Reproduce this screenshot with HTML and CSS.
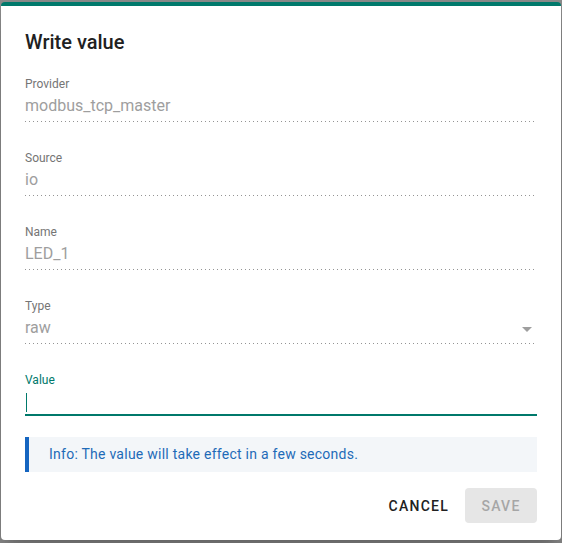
FILE: index.html
```html
<!DOCTYPE html>
<html lang="en">
<head>
  <meta charset="UTF-8">
  <meta name="viewport" content="width=device-width, initial-scale=1.0">
  <title>Write value</title>
  <link rel="stylesheet" href="styles.css">
</head>
<body>
  <div class="dialog">
    <h2 class="dialog-title">Write value</h2>
    <div class="dialog-content">
      <div class="field disabled">
        <label class="field-label">Provider</label>
        <div class="field-input">modbus_tcp_master</div>
      </div>
      <div class="field disabled">
        <label class="field-label">Source</label>
        <div class="field-input">io</div>
      </div>
      <div class="field disabled">
        <label class="field-label">Name</label>
        <div class="field-input">LED_1</div>
      </div>
      <div class="field disabled">
        <label class="field-label">Type</label>
        <div class="field-input select">
          <span class="select-value">raw</span>
          <svg class="select-icon" viewBox="0 0 24 24" width="24" height="24"><path d="M7 10l5 5 5-5z"/></svg>
        </div>
      </div>
      <div class="field focused">
        <label class="field-label">Value</label>
        <div class="field-input"><span class="caret"></span></div>
      </div>
      <div class="info">Info: The value will take effect in a few seconds.</div>
    </div>
    <div class="dialog-actions">
      <button class="btn btn-text">Cancel</button>
      <button class="btn btn-disabled" disabled>Save</button>
    </div>
  </div>
</body>
</html>
```

FILE: styles.css
```css
body {
  margin: 0;
  background: #8b8b8b;
  font-family: Roboto, 'Liberation Sans', sans-serif;
  height: 543px;
  overflow: hidden;
}

.dialog {
  width: 560px;
  margin: 2px 0 0 1px;
  background: #fff;
  border-top: 4px solid #00796b;
  border-radius: 4px;
  box-sizing: border-box;
  padding-bottom: 17px;
  box-shadow: 0 11px 15px -7px rgba(0, 0, 0, 0.2), 0 24px 38px 3px rgba(0, 0, 0, 0.14);
}

.dialog-title {
  margin: 0;
  padding: 20px 24px 0;
  font-size: 20px;
  line-height: 32px;
  font-weight: 500;
  color: #212121;
}

.dialog-content {
  padding: 18px 24px 0;
}

.field {
  margin-bottom: 28px;
}

.field-label {
  display: block;
  font-size: 12px;
  line-height: 16px;
  color: #757575;
}

.field-input {
  font-size: 16px;
  line-height: 24px;
  height: 24px;
  padding: 2px 0 3px;
  color: #9e9e9e;
}

.field.disabled .field-input {
  background-image: linear-gradient(to right, rgba(0, 0, 0, 0.42) 25%, transparent 0%);
  background-size: 4px 1px;
  background-repeat: repeat-x;
  background-position: left bottom;
  padding-bottom: 4px;
}

.select {
  display: flex;
  align-items: center;
}

.select-value {
  flex: 1;
}

.select-icon {
  fill: rgba(0, 0, 0, 0.38);
  margin-right: -2px;
  margin-top: 2px;
}

.field.focused {
  margin-bottom: 21px;
}

.field.focused .field-label {
  color: #00796b;
}

.field.focused .field-input {
  border-bottom: 2px solid #00796b;
  padding-bottom: 0;
  display: flex;
  align-items: center;
}

.caret {
  display: block;
  width: 1px;
  height: 19px;
  margin-left: 1px;
  margin-top: 1px;
  background: #00796b;
}

.info {
  background: #f3f6f9;
  border-left: 4px solid #1565c0;
  color: #1e6bb8;
  font-size: 14px;
  line-height: 35px;
  height: 35px;
  padding-left: 20px;
  letter-spacing: 0.25px;
}

.dialog-actions {
  display: flex;
  justify-content: flex-end;
  gap: 8px;
  padding: 16px 24px 0;
}

.btn {
  font-family: inherit;
  font-size: 14px;
  font-weight: 500;
  text-transform: uppercase;
  letter-spacing: 1.25px;
  height: 35px;
  border: none;
  border-radius: 4px;
  background: none;
  cursor: pointer;
}

.btn-text {
  color: #212121;
  padding: 0 8px;
}

.btn-disabled {
  background: #e6e6e6;
  color: #a6a6a6;
  padding: 0 16px;
  min-width: 72px;
  cursor: default;
}
```
